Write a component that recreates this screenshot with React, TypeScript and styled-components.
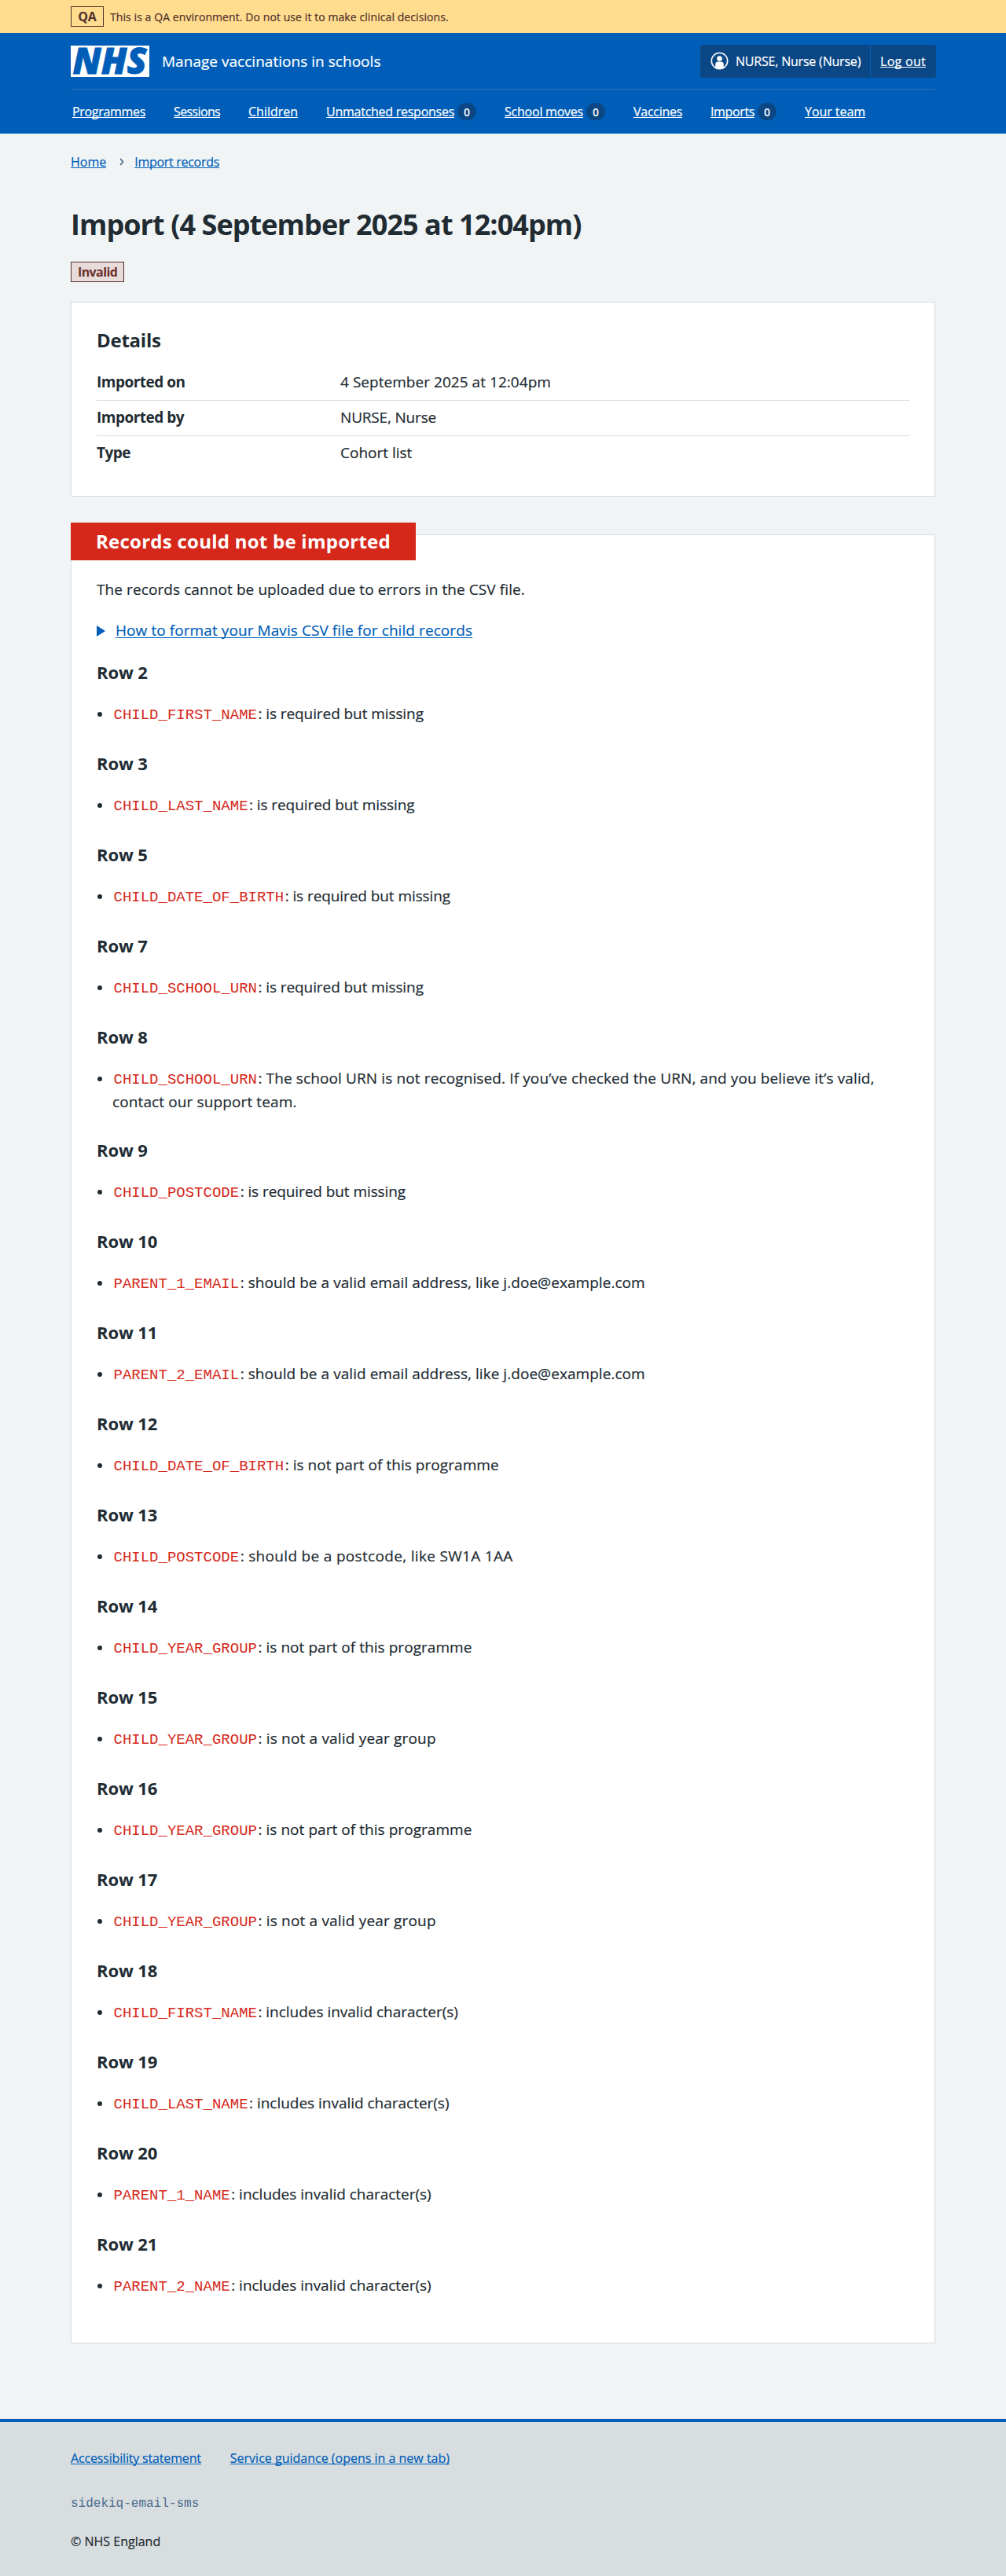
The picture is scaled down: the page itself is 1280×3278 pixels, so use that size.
import React from "react";
import styled, { createGlobalStyle } from "styled-components";

const sans = `"Open Sans", "Noto Sans", Arial, sans-serif`;
const mono = `"Liberation Mono", "Courier New", monospace`;

const c = {
  blue: "#005eb8",
  darkBlue: "#0b4785",
  text: "#212b32",
  secondary: "#4a6b8c",
  border: "#d8dde0",
  page: "#f0f4f5",
  red: "#d5281b",
  white: "#ffffff",
};

const GlobalStyle = createGlobalStyle`
  *, *::before, *::after { box-sizing: border-box; }
  body {
    margin: 0;
    background: ${c.page};
    color: ${c.text};
    font: 400 19px/28px ${sans};
    -webkit-text-stroke: 0.2px;
  }
  h1, h2, h3, p, ul, dl, dd, dt { margin: 0; padding: 0; }
  h1, h2, h3, dt, strong, code { -webkit-text-stroke: 0; }
  ul { list-style: none; }
`;

const Container = styled.div`
  width: 1100px;
  margin: 0 auto;
`;

const Tracked = styled.span<{ $tracking: number }>`
  letter-spacing: ${(p) => p.$tracking}px;
`;

const Link = styled.a<{ $tracking?: number }>`
  color: ${c.blue};
  letter-spacing: ${(p) => p.$tracking ?? 0}px;
  text-decoration: underline;
  text-decoration-thickness: 1px;
  text-underline-offset: 0.08em;
  text-decoration-skip-ink: none;
  white-space: nowrap;
`;

const Banner = styled.div`
  background: #ffdc8e;
  color: #4f302c;
`;

const BannerInner = styled(Container)`
  display: flex;
  align-items: center;
  gap: 8px;
  height: 42px;
`;

const QaTag = styled.strong`
  display: flex;
  align-items: center;
  justify-content: center;
  width: 42px;
  height: 26px;
  border: 1px solid currentColor;
  font-size: 16px;
  font-weight: 700;
  line-height: 20px;
  letter-spacing: -0.14px;
`;

const BannerText = styled.span`
  padding-top: 2px;
  font-size: 14px;
  line-height: 20px;
  letter-spacing: 0.08px;
`;

const Header = styled.header`
  background: ${c.blue};
  color: ${c.white};
`;

const HeaderTop = styled.div`
  display: flex;
  align-items: center;
  height: 71px;
  margin-right: -1px;
`;

const Logo = styled.svg`
  overflow: visible;
`;

const ServiceName = styled.span`
  flex: 1;
  margin-left: 16px;
  letter-spacing: 0.03px;
`;

const Account = styled.div`
  display: flex;
  align-items: stretch;
  width: 300px;
  height: 42px;
  padding: 1px;
  border-radius: 4px;
  background: ${c.darkBlue};
  font-size: 16px;
  line-height: 40px;
`;

const AccountUser = styled.div`
  display: flex;
  align-items: center;
  gap: 9px;
  width: 216px;
  padding-left: 12px;
  border-right: 1px solid ${c.blue};
  letter-spacing: -0.2px;
  white-space: nowrap;
`;

const AccountAction = styled.div`
  padding-left: 12px;
`;

const HeaderLink = styled(Link)`
  color: ${c.white};
`;

const Nav = styled.nav`
  border-top: 1px solid #346eb0;
`;

const NavList = styled.ul`
  display: flex;
  align-items: center;
  gap: 36px;
  height: 56px;
  padding-left: 2px;
  font-size: 16px;
  line-height: 24px;
`;

const NavItem = styled.li`
  display: flex;
  align-items: center;
  gap: 4px;
`;

const Badge = styled.span`
  display: flex;
  align-items: center;
  justify-content: center;
  width: 24px;
  height: 22px;
  padding-top: 2px;
  border-radius: 11px;
  background: ${c.darkBlue};
  font-size: 14px;
  font-weight: 600;
  line-height: 20px;
  -webkit-text-stroke: 0;
`;

const Breadcrumb = styled.nav`
  display: flex;
  align-items: center;
  height: 24px;
  margin-top: 24px;
  font-size: 16px;
  line-height: 24px;
`;

const Chevron = styled.svg`
  margin: 0 13px 0 17px;
`;

const Title = styled.h1`
  margin-top: 45px;
  font-size: 36px;
  font-weight: 700;
  line-height: 46px;
  letter-spacing: -0.93px;
`;

const StatusTag = styled.strong`
  display: flex;
  align-items: center;
  width: 68px;
  height: 26px;
  margin-top: 24px;
  padding-left: 8px;
  border: 1px solid #55302c;
  background: #e8dcda;
  color: #6b2f29;
  font-size: 16px;
  font-weight: 700;
  line-height: 24px;
  letter-spacing: -0.6px;
`;

const Card = styled.section<{ $top: number; $height: number }>`
  margin-top: ${(p) => p.$top}px;
  height: ${(p) => p.$height}px;
  padding: 0 32px;
  border: 1px solid ${c.border};
  background: ${c.white};
`;

const CardTitle = styled.h2`
  padding-top: 32px;
  font-size: 24px;
  font-weight: 700;
  line-height: 32px;
  letter-spacing: -0.25px;
`;

const Summary = styled.dl`
  margin-top: 16px;
`;

const SummaryRow = styled.div`
  display: grid;
  grid-template-columns: 310px 1fr;
  height: 45px;
  padding-top: 7px;
  &:not(:last-child) {
    border-bottom: 1px solid ${c.border};
  }
`;

const SummaryKey = styled.dt`
  font-weight: 700;
  letter-spacing: -0.5px;
`;

const ErrorLabel = styled.h2`
  width: 439px;
  height: 48px;
  margin: -16px 0 0 -33px;
  padding-left: 32px;
  background: ${c.red};
  color: ${c.white};
  font-size: 24px;
  font-weight: 700;
  line-height: 48px;
  letter-spacing: 0.25px;
`;

const Intro = styled.p`
  margin-top: 23px;
  letter-spacing: 0.09px;
`;

const Disclosure = styled.div`
  display: flex;
  align-items: center;
  gap: 13px;
  margin-top: 24px;
`;

const Triangle = styled.svg`
  margin-top: 2px;
`;

const RowBlock = styled.section`
  padding: 25px 0 8px;
`;

const RowTitle = styled.h3`
  margin-bottom: 25px;
  font-size: 22px;
  font-weight: 700;
  line-height: 28px;
  letter-spacing: -0.1px;
`;

const ErrorItem = styled.li`
  display: grid;
  grid-template-columns: 20px 1fr;
`;

const Dot = styled.span`
  width: 6px;
  height: 6px;
  margin: 12px 0 0 1px;
  border-radius: 50%;
  background: ${c.text};
`;

const Field = styled.code`
  padding: 0 1.5px;
  color: ${c.red};
  font-family: ${mono};
  font-size: 19px;
`;

const Footer = styled.footer`
  height: 200px;
  margin-top: 96px;
  border-top: 4px solid ${c.blue};
  background: ${c.border};
  font-size: 16px;
  line-height: 24px;
`;

const FooterLinks = styled.div`
  display: flex;
  gap: 37px;
  padding-top: 34px;
`;

const Worker = styled.p`
  margin-top: 34px;
  color: ${c.secondary};
  font-family: ${mono};
  -webkit-text-stroke: 0;
`;

const Copyright = styled.p`
  margin-top: 24px;
`;

const navItems: { label: string; tracking: number; count?: number }[] = [
  { label: "Programmes", tracking: -0.31 },
  { label: "Sessions", tracking: -0.64 },
  { label: "Children", tracking: -0.01 },
  { label: "Unmatched responses", tracking: -0.26, count: 0 },
  { label: "School moves", tracking: -0.23, count: 0 },
  { label: "Vaccines", tracking: -0.28 },
  { label: "Imports", tracking: -0.37, count: 0 },
  { label: "Your team", tracking: -0.05 },
];

const details: { label: string; value: string; tracking: number }[] = [
  { label: "Imported on", value: "4 September 2025 at 12:04pm", tracking: 0.04 },
  { label: "Imported by", value: "NURSE, Nurse", tracking: -0.18 },
  { label: "Type", value: "Cohort list", tracking: 0 },
];

type Message = { text: string; tracking: number };

const missing: Message = { text: "is required but missing", tracking: -0.08 };
const email: Message = {
  text: "should be a valid email address, like j.doe@example.com",
  tracking: 0.05,
};
const programme: Message = { text: "is not part of this programme", tracking: 0.05 };
const yearGroup: Message = { text: "is not a valid year group", tracking: 0.18 };
const characters: Message = { text: "includes invalid character(s)", tracking: -0.02 };
const postcode: Message = { text: "should be a postcode, like SW1A 1AA", tracking: 0.32 };
const school: Message = {
  text: "The school URN is not recognised. If you’ve checked the URN, and you believe it’s valid, contact our support team.",
  tracking: 0.12,
};

const errors: [number, string, Message][] = [
  [2, "CHILD_FIRST_NAME", missing],
  [3, "CHILD_LAST_NAME", missing],
  [5, "CHILD_DATE_OF_BIRTH", missing],
  [7, "CHILD_SCHOOL_URN", missing],
  [8, "CHILD_SCHOOL_URN", school],
  [9, "CHILD_POSTCODE", missing],
  [10, "PARENT_1_EMAIL", email],
  [11, "PARENT_2_EMAIL", email],
  [12, "CHILD_DATE_OF_BIRTH", programme],
  [13, "CHILD_POSTCODE", postcode],
  [14, "CHILD_YEAR_GROUP", programme],
  [15, "CHILD_YEAR_GROUP", yearGroup],
  [16, "CHILD_YEAR_GROUP", programme],
  [17, "CHILD_YEAR_GROUP", yearGroup],
  [18, "CHILD_FIRST_NAME", characters],
  [19, "CHILD_LAST_NAME", characters],
  [20, "PARENT_1_NAME", characters],
  [21, "PARENT_2_NAME", characters],
];

const NhsLogo = () => (
  <Logo width="100" height="40" viewBox="0 0 100 40" role="img" aria-label="NHS">
    <rect width="100" height="40" fill={c.white} />
    <text
      x="2.5"
      y="36.2"
      fill={c.blue}
      stroke={c.blue}
      strokeWidth="0.8"
      fontFamily="Open Sans"
      fontWeight="800"
      fontStyle="italic"
      fontSize="45.5"
      textLength="94"
      lengthAdjust="spacingAndGlyphs"
    >
      NHS
    </text>
  </Logo>
);

const UserIcon = () => (
  <svg width="23" height="23" viewBox="0 0 23 23" aria-hidden="true">
    <circle cx="11.5" cy="11.5" r="10.2" fill="none" stroke={c.white} strokeWidth="1.6" />
    <circle cx="11.5" cy="8.6" r="3.3" fill={c.white} />
    <path d="M6.2 20v-3.800q0-3.600 3.300-3.600h4q3.300 0 3.300 3.600V20q-5.300 3-10.600 0z" fill={c.white} />
  </svg>
);

export default function App() {
  return (
    <>
      <GlobalStyle />
      <Banner>
        <BannerInner>
          <QaTag>QA</QaTag>
          <BannerText>
            This is a QA environment. Do not use it to make clinical decisions.
          </BannerText>
        </BannerInner>
      </Banner>
      <Header>
        <Container>
          <HeaderTop>
            <NhsLogo />
            <ServiceName>Manage vaccinations in schools</ServiceName>
            <Account>
              <AccountUser>
                <UserIcon />
                <span>NURSE, Nurse (Nurse)</span>
              </AccountUser>
              <AccountAction>
                <HeaderLink $tracking={0.29}>Log out</HeaderLink>
              </AccountAction>
            </Account>
          </HeaderTop>
          <Nav>
            <NavList>
              {navItems.map((item) => (
                <NavItem key={item.label}>
                  <HeaderLink $tracking={item.tracking}>{item.label}</HeaderLink>
                  {item.count !== undefined && <Badge>{item.count}</Badge>}
                </NavItem>
              ))}
            </NavList>
          </Nav>
        </Container>
      </Header>
      <Container as="main">
        <Breadcrumb>
          <Link>Home</Link>
          <Chevron width="6" height="10" viewBox="0 0 6 10">
            <path d="M1 1l3.500 4L1 9" fill="none" stroke={c.secondary} strokeWidth="1.700" />
          </Chevron>
          <Link $tracking={-0.29}>Import records</Link>
        </Breadcrumb>
        <Title>Import (4 September 2025 at 12:04pm)</Title>
        <StatusTag>Invalid</StatusTag>
        <Card $top={25} $height={248}>
          <CardTitle>Details</CardTitle>
          <Summary>
            {details.map((item) => (
              <SummaryRow key={item.label}>
                <SummaryKey>{item.label}</SummaryKey>
                <dd>
                  <Tracked $tracking={item.tracking}>{item.value}</Tracked>
                </dd>
              </SummaryRow>
            ))}
          </Summary>
        </Card>
        <Card $top={48} $height={2302}>
          <ErrorLabel>Records could not be imported</ErrorLabel>
          <Intro>The records cannot be uploaded due to errors in the CSV file.</Intro>
          <Disclosure>
            <Triangle width="11" height="14" viewBox="0 0 11 14" aria-hidden="true">
              <path d="M0 0l11 7L0 14z" fill={c.blue} />
            </Triangle>
            <Link $tracking={0.08}>How to format your Mavis CSV file for child records</Link>
          </Disclosure>
          {errors.map(([row, field, message]) => (
            <RowBlock key={row}>
              <RowTitle>{`Row ${row}`}</RowTitle>
              <ul>
                <ErrorItem>
                  <Dot />
                  <div>
                    <Field>{field}</Field>
                    <Tracked $tracking={message.tracking}>{`: ${message.text}`}</Tracked>
                  </div>
                </ErrorItem>
              </ul>
            </RowBlock>
          ))}
        </Card>
      </Container>
      <Footer>
        <Container>
          <FooterLinks>
            <Link $tracking={-0.17}>Accessibility statement</Link>
            <Link>Service guidance (opens in a new tab)</Link>
          </FooterLinks>
          <Worker>sidekiq-email-sms</Worker>
          <Copyright>© NHS England</Copyright>
        </Container>
      </Footer>
    </>
  );
}
